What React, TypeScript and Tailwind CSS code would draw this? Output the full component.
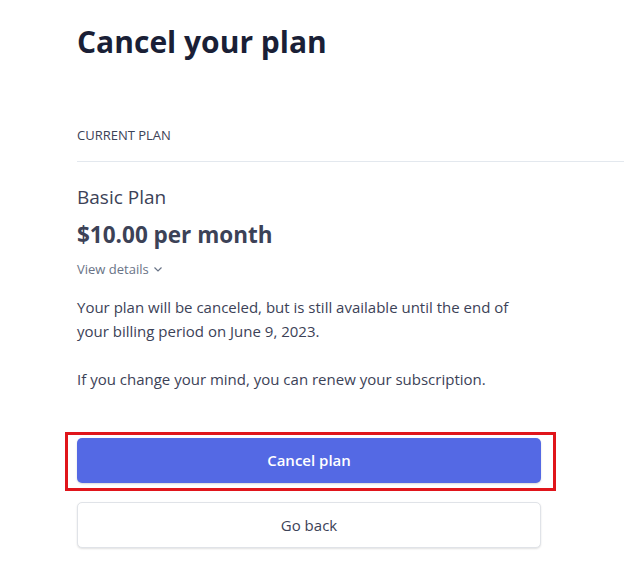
import React from "react";

export default function App() {
  return (
    <div className="min-h-[570px] w-[624px] bg-white font-['Open_Sans',sans-serif] text-[#3c4257]">
      <div className="pl-[77px] pt-[22px]">
        <h1 className="text-[30px] font-bold leading-[40px] text-[#1a1f36]">Cancel your plan</h1>
        <div className="mt-[64px] text-[13px] leading-[18px] text-[#3c4257]">CURRENT PLAN</div>
        <div className="mt-[17px] h-px bg-[#e3e8ee]" />
        <div className="mt-[23px] text-[19px] font-medium leading-[24px] text-[#3c4257]">Basic Plan</div>
        <div className="mt-[11px] text-[22.5px] font-bold leading-[30px] text-[#3c4257]">$10.00 per month</div>
        <div className="mt-[10px] flex items-center gap-1 text-[13px] leading-[18px] text-[#697386]">
          <span>View details</span>
          <svg width="10" height="10" viewBox="0 0 10 10" fill="none" stroke="currentColor" strokeWidth="1.2">
            <path d="M1.5 3.5 L5 7 L8.5 3.5" />
          </svg>
        </div>
        <div className="mt-[17px] w-[448px] text-[15px] leading-[24px] text-[#3c4257]">
          <p>Your plan will be canceled, but is still available until the end of your billing period on June 9, 2023.</p>
          <p className="mt-[24px]">If you change your mind, you can renew your subscription.</p>
        </div>
        <div className="relative mt-[47px] w-[464px]">
          <button className="flex h-[45px] w-[464px] items-center justify-center rounded-[5px] bg-[#5469e4] text-[15px] font-semibold text-white shadow-[0_1px_2px_rgba(0,0,0,0.15)]">
            Cancel plan
          </button>
          <div className="pointer-events-none absolute left-[-12px] top-[-6px] h-[59px] w-[491px] border-[3px] border-[#e0151b]" />
        </div>
        <button className="mt-[19px] flex h-[46px] w-[464px] items-center justify-center rounded-[5px] border border-[#e0e3e8] bg-white text-[15px] font-medium text-[#3c4257] shadow-[0_1px_2px_rgba(0,0,0,0.12)]">
          Go back
        </button>
      </div>
    </div>
  );
}
